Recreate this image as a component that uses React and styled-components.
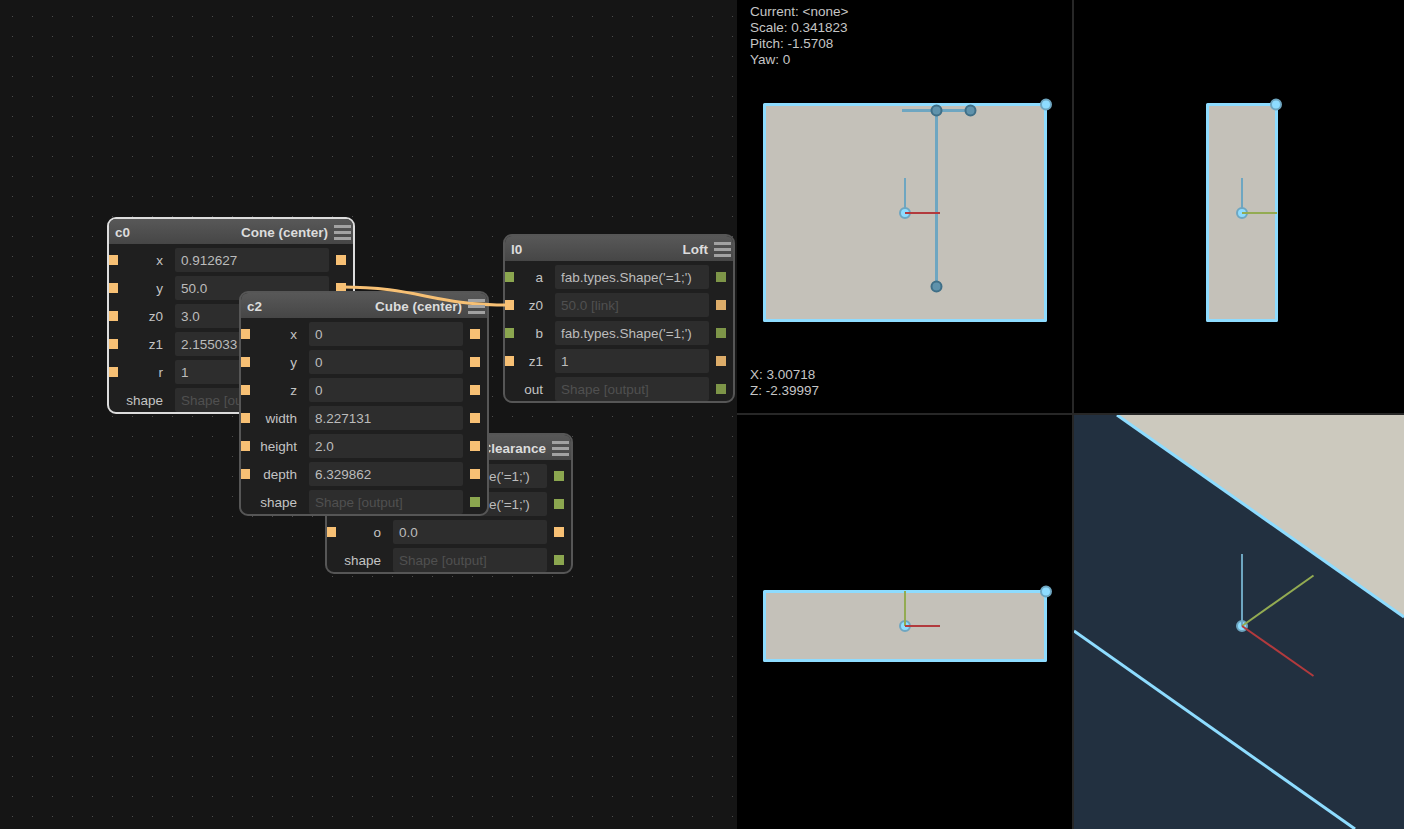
import styled, { createGlobalStyle } from "styled-components";

const ORANGE = "#f7c074";
const GREEN = "#8ba64f";
const SKY = "#8edcff";
const STEEL = "#6ea6c1";
const RED = "#b23a3d";
const OLIVE = "#93ab52";
const SHAPE = "fab.types.Shape('=1;')";

const nodes = [
  {
    id: "c0",
    title: "Cone (center)",
    x: 107,
    y: 217,
    labelWidth: 57,
    selected: true,
    rows: [
      { label: "x", value: "0.912627", left: "num", right: "num" },
      { label: "y", value: "50.0", left: "num", right: "num" },
      { label: "z0", value: "3.0", left: "num", right: "num" },
      { label: "z1", value: "2.155033", left: "num", right: "num" },
      { label: "r", value: "1", left: "num", right: "num" },
      { label: "shape", value: "Shape [output]", muted: true, right: "shape" },
    ],
  },
  {
    id: "c1",
    title: "Clearance",
    x: 325,
    y: 433,
    labelWidth: 57,
    rows: [
      { label: "a", value: SHAPE, left: "shape", right: "shape" },
      { label: "b", value: SHAPE, left: "shape", right: "shape" },
      { label: "o", value: "0.0", left: "num", right: "num" },
      { label: "shape", value: "Shape [output]", muted: true, right: "shape" },
    ],
  },
  {
    id: "c2",
    title: "Cube (center)",
    x: 239,
    y: 291,
    labelWidth: 59,
    rows: [
      { label: "x", value: "0", left: "num", right: "num" },
      { label: "y", value: "0", left: "num", right: "num" },
      { label: "z", value: "0", left: "num", right: "num" },
      { label: "width", value: "8.227131", left: "num", right: "num" },
      { label: "height", value: "2.0", left: "num", right: "num" },
      { label: "depth", value: "6.329862", left: "num", right: "num" },
      { label: "shape", value: "Shape [output]", muted: true, right: "shape" },
    ],
  },
  {
    id: "l0",
    title: "Loft",
    x: 503,
    y: 234,
    labelWidth: 41,
    dimOutputs: true,
    rows: [
      { label: "a", value: SHAPE, left: "shape", right: "shape" },
      { label: "z0", value: "50.0 [link]", muted: true, left: "num", right: "num" },
      { label: "b", value: SHAPE, left: "shape", right: "shape" },
      { label: "z1", value: "1", left: "num", right: "num" },
      { label: "out", value: "Shape [output]", muted: true, right: "shape" },
    ],
  },
];

const GlobalStyle = createGlobalStyle`
  html, body {
    margin: 0;
    height: 100%;
    background: #000;
    overflow: hidden;
  }
  body {
    font-family: "Liberation Sans", Arial, sans-serif;
  }
`;

const Page = styled.div`
  display: flex;
  width: 1404px;
  height: 829px;
`;

/* node canvas with the dotted grid */
const Canvas = styled.div`
  position: relative;
  flex: 0 0 737px;
  height: 100%;
  overflow: hidden;
  background-color: #4c4c4c;
  background-image: linear-gradient(to right, #151515 19px, transparent 19px),
    linear-gradient(to bottom, #151515 19px, transparent 19px);
  background-size: 20px 20px;
  background-position: -7px -3px;
`;

const Node = styled.div`
  position: absolute;
  left: ${(p) => p.$x}px;
  top: ${(p) => p.$y}px;
  border: 2px solid ${(p) => (p.$selected ? "#dcdcdc" : "#565656")};
  border-radius: 9px;
  background: #1f1f1f;
  overflow: hidden;
`;

const NodeHeader = styled.div`
  display: flex;
  align-items: center;
  justify-content: space-between;
  height: 25px;
  padding: 1px 2px 0 6px;
  box-sizing: border-box;
  background: linear-gradient(#585858, #464646);
  color: #dcdcdc;
  font-size: 13.5px;
  font-weight: bold;
`;

const Title = styled.div`
  display: flex;
  align-items: center;
  gap: 6px;
`;

const Menu = styled.div`
  position: relative;
  z-index: 2;
  display: flex;
  flex-direction: column;
  gap: 3px;
  width: 17px;
`;

const MenuBar = styled.span`
  height: 3px;
  background: #a2a2a2;
`;

const Rows = styled.div`
  display: flex;
  flex-direction: column;
  gap: 4px;
  padding: 4px 7px 0 0;
  margin-left: -1px;
`;

const Row = styled.div`
  display: grid;
  grid-template-columns: 10px ${(p) => p.$labelWidth}px 154px 17px;
  align-items: center;
  height: 24px;
`;

const Port = styled.span`
  width: 10px;
  height: 10px;
  background: ${(p) => (p.$type === "shape" ? GREEN : ORANGE)};
  opacity: ${(p) => (p.$dim ? 0.88 : 1)};
`;

const OutPort = styled(Port)`
  margin-left: 7px;
`;

const Label = styled.span`
  padding-right: 12px;
  text-align: right;
  color: #c4c4c4;
  font-size: 13.5px;
`;

const Value = styled.div`
  height: 24px;
  padding-left: 6px;
  border-radius: 2px;
  background: #2d2d2d;
  color: ${(p) => (p.$muted ? "#505050" : "#bcbcbc")};
  font-size: 13.5px;
  line-height: 25px;
  white-space: nowrap;
  overflow: hidden;
`;

const Wire = styled.svg`
  position: absolute;
  inset: 0;
  z-index: 1;
  pointer-events: none;
`;

/* four viewports split by thin lines */
const Views = styled.div`
  flex: 1;
  display: grid;
  grid-template-columns: 335px 330px;
  grid-template-rows: 413px 414px;
  gap: 2px;
  background: #272727;
`;

const View = styled.div`
  position: relative;
  background: ${(p) => p.$bg || "#000"};
  overflow: hidden;
`;

const ViewSvg = styled.svg`
  display: block;
  width: 100%;
  height: 100%;
`;

const Readout = styled.div`
  position: absolute;
  left: 13px;
  color: #c6c6c6;
  font-size: 13.5px;
  line-height: 16px;
  top: ${(p) => p.$top}px;
`;

const GraphNode = ({ node }) => (
  <Node $x={node.x} $y={node.y} $selected={node.selected}>
    <NodeHeader>
      <span>{node.id}</span>
      <Title>
        {node.title}
        <Menu>
          <MenuBar />
          <MenuBar />
          <MenuBar />
        </Menu>
      </Title>
    </NodeHeader>
    <Rows>
      {node.rows.map((row) => (
        <Row key={row.label} $labelWidth={node.labelWidth}>
          {row.left ? <Port $type={row.left} /> : <span />}
          <Label>{row.label}</Label>
          <Value $muted={row.muted}>{row.value}</Value>
          <OutPort $type={row.right} $dim={node.dimOutputs} />
        </Row>
      ))}
    </Rows>
  </Node>
);

const Handle = ({ x, y, dark }) => (
  <circle
    cx={x}
    cy={y}
    r="5"
    fill={dark ? "#5f92ab" : SKY}
    stroke={dark ? "#3f6f87" : STEEL}
    strokeWidth="2"
  />
);

const Origin = ({ x, y }) => (
  <circle cx={x} cy={y} r="5" fill={SKY} stroke={STEEL} strokeWidth="2" />
);

const Axis = ({ x1, y1, x2, y2, color, width = 2 }) => (
  <line x1={x1} y1={y1} x2={x2} y2={y2} stroke={color} strokeWidth={width} />
);

const Body = ({ x, y, width, height }) => (
  <rect
    x={x}
    y={y}
    width={width}
    height={height}
    fill="#c4c1b9"
    stroke={SKY}
    strokeWidth="3"
    strokeLinejoin="round"
  />
);

export default function App() {
  return (
    <Page>
      <GlobalStyle />
      <Canvas>
        {nodes.map((node) => (
          <GraphNode key={node.id} node={node} />
        ))}
        <Wire width="737" height="829">
          <path
            d="M341 287 C 420 287, 430 305, 510 305"
            fill="none"
            stroke={ORANGE}
            strokeWidth="3"
          />
        </Wire>
      </Canvas>
      <Views>
        <View>
          <ViewSvg viewBox="737 0 335 413">
            <Body x={764.5} y={104.5} width={281} height={216} />
            <Axis x1={902} y1={110.5} x2={970} y2={110.5} color={STEEL} width={3} />
            <Axis x1={936.5} y1={110} x2={936.5} y2={286} color={STEEL} width={3} />
            <Handle x={936.5} y={110.5} dark />
            <Handle x={970.5} y={110.5} dark />
            <Handle x={936.5} y={286.5} dark />
            <Axis x1={905} y1={178} x2={905} y2={213} color={STEEL} />
            <Origin x={905} y={213} />
            <Axis x1={905} y1={213} x2={940} y2={213} color={RED} />
            <Handle x={1046} y={104.5} />
          </ViewSvg>
          <Readout $top={4}>
            Current: &lt;none&gt;
            <br />
            Scale: 0.341823
            <br />
            Pitch: -1.5708
            <br />
            Yaw: 0
          </Readout>
          <Readout $top={367}>
            X: 3.00718
            <br />
            Z: -2.39997
          </Readout>
        </View>
        <View>
          <ViewSvg viewBox="1074 0 330 413">
            <Body x={1207.5} y={104.5} width={69} height={216} />
            <Axis x1={1242} y1={178} x2={1242} y2={213} color={STEEL} />
            <Origin x={1242} y={213} />
            <Axis x1={1242} y1={213} x2={1277} y2={213} color={OLIVE} />
            <Handle x={1276} y={104.5} />
          </ViewSvg>
        </View>
        <View>
          <ViewSvg viewBox="737 415 335 414">
            <Body x={764.5} y={591.5} width={281} height={69} />
            <Origin x={905} y={626} />
            <Axis x1={905} y1={591} x2={905} y2={626} color={OLIVE} />
            <Axis x1={905} y1={626} x2={940} y2={626} color={RED} />
            <Handle x={1046} y={591.5} />
          </ViewSvg>
        </View>
        <View $bg="#223040">
          <ViewSvg viewBox="1074 415 330 414">
            <polygon points="1117,415 1404,617 1404,415" fill="#ccc9be" />
            <Axis x1={1117} y1={415} x2={1404} y2={617} color={SKY} width={3} />
            <Axis x1={1074} y1={631} x2={1355} y2={829} color={SKY} width={3} />
            <Origin x={1242} y={626} />
            <Axis x1={1242} y1={554} x2={1242} y2={626} color={STEEL} width={2} />
            <Axis x1={1242} y1={626} x2={1313.5} y2={575.5} color={OLIVE} width={2} />
            <Axis x1={1242} y1={626} x2={1313.5} y2={676} color={RED} width={2} />
          </ViewSvg>
        </View>
      </Views>
    </Page>
  );
}
